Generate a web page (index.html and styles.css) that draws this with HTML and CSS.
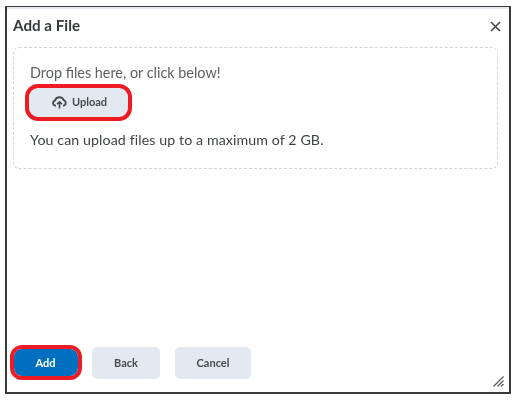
FILE: index.html
```html
<!DOCTYPE html>
<html lang="en">
<head>
<meta charset="utf-8">
<title>Add a File</title>
<link rel="stylesheet" href="styles.css">
</head>
<body>
<div class="dialog">
  <header class="head">
    <h1 class="title">Add a File</h1>
    <button class="close" aria-label="Close">
      <svg width="11" height="11" viewBox="0 0 11 11"><path d="M1 1l9 9M10 1l-9 9" stroke="#494c4e" stroke-width="1.6" fill="none"/></svg>
    </button>
  </header>
  <section class="drop">
    <p class="hint">Drop files here, or click below!</p>
    <button class="btn upload">
      <svg class="cloud" width="15" height="13" viewBox="0 0 15 13"><path d="M4 9.6H3.4A2.6 2.6 0 0 1 3 4.5 4.6 4.6 0 0 1 11.7 4.2 2.8 2.8 0 0 1 11.6 9.6H11" fill="none" stroke="#494c4e" stroke-width="1.9"/><path d="M7.5 12.6V6.2M5 8.2l2.5-2.4L10 8.2" fill="none" stroke="#494c4e" stroke-width="1.6"/></svg>
      <span>Upload</span>
    </button>
    <p class="limit">You can upload files up to a maximum of 2 GB.</p>
  </section>
  <footer class="foot">
    <button class="btn primary">Add</button>
    <button class="btn back">Back</button>
    <button class="btn cancel">Cancel</button>
  </footer>
  <svg class="grip" width="11" height="11" viewBox="0 0 11 11"><path d="M0.5 10.5L10.5 0.5M4.5 10.5L10.5 4.5M8 10.5L10.5 8" stroke="#555" stroke-width="1.2" fill="none"/></svg>
</div>
</body>
</html>
```
FILE: styles.css
```css
* { box-sizing: border-box; }
html, body { margin: 0; background: #fff; }
body { padding: 6px 3px 7px 5px; height: 401px; font-family: Lato, "Open Sans", sans-serif; color: #494c4e; }
.dialog {
  position: relative;
  height: 100%;
  border: 2px solid #3a3a3a;
  border-top-width: 1.5px;
  padding: 0 11px 0 6px;
  display: flex;
  flex-direction: column;
  background: #fff;
  box-shadow: inset 0 2px 0 #e6eaf0;
  filter: blur(0.3px);
}
.head { display: flex; align-items: center; justify-content: space-between; height: 39.5px; padding-bottom: 3px; }
.title { margin: 0; font-size: 15.2px; font-weight: 700; color: #36393b; }
.close { border: 0; background: none; padding: 0; display: flex; margin-right: -3px; margin-top: 3px; }
.drop {
  height: 122.5px;
  border: 1.5px dashed #cdd5dc;
  border-radius: 6px;
  padding: 15.5px 16px 0;
}
.hint { margin: 0; font-size: 14.4px; line-height: 20px; color: #5d6063; }
.limit { margin: 13px 0 0; font-size: 14.2px; line-height: 20px; color: #3f4244; letter-spacing: 0.1px; }
.btn {
  border: 0;
  border-radius: 5px;
  background: #e3e9f1;
  font: 700 11px Lato, "Open Sans", sans-serif;
  color: #494c4e;
  display: flex;
  align-items: center;
  justify-content: center;
  padding: 0 0 1px;
}
.upload {
  width: 99px;
  height: 29px;
  margin-top: 4.5px;
  margin-left: -1.5px;
  gap: 5px;
  padding-left: 3px;
  border-radius: 9px;
  outline: 4px solid #ed1c24;
  outline-offset: 0;
}
.cloud { flex: none; position: relative; top: 1px; }
.foot { margin-top: auto; display: flex; align-items: center; padding: 0 0 13.5px 0; }
.primary {
  width: 64px;
  height: 27px;
  margin-left: 0.5px;
  margin-right: 14.5px;
  background: #006fbf;
  color: #fff;
  border-radius: 8px;
  outline: 4px solid #ed1c24;
}
.back { width: 68px; height: 32px; margin-right: 15px; }
.cancel { width: 76px; height: 32px; }
.grip { position: absolute; right: 5px; bottom: 5px; }
```
